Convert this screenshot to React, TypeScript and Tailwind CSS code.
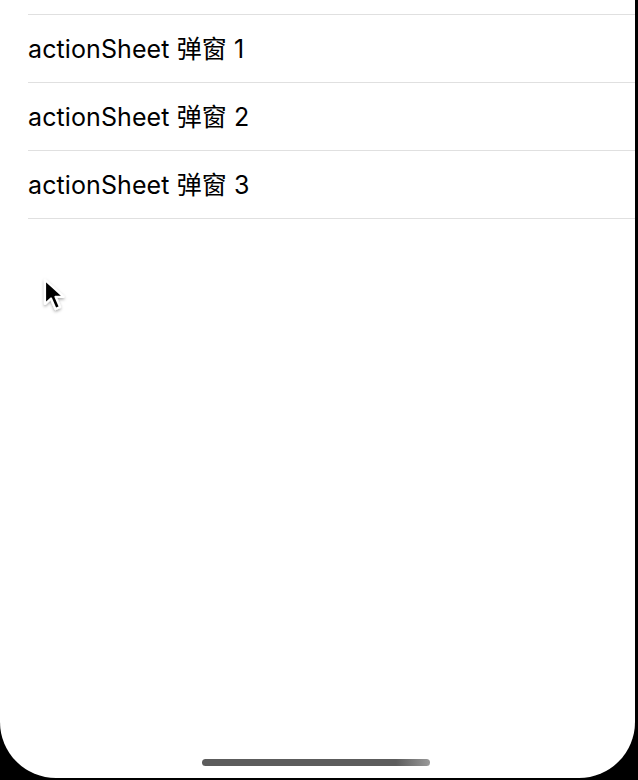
const items = ["actionSheet 弹窗 1", "actionSheet 弹窗 2", "actionSheet 弹窗 3"];

function Cursor() {
  return (
    <svg
      className="absolute left-[41px] top-[276px]"
      width="28"
      height="42"
      viewBox="0 0 28 42"
    >
      <defs>
        <filter id="sh" x="-50%" y="-50%" width="200%" height="200%">
          <feDropShadow dx="0" dy="1.5" stdDeviation="1.5" floodColor="#000" floodOpacity="0.35" />
        </filter>
      </defs>
      <path
        d="M4 4 L4 28 L10 22.5 L14.5 33 L19 31 L14.5 20.8 L22.5 20.8 Z"
        fill="#000"
        stroke="#fff"
        strokeWidth="2.2"
        strokeLinejoin="round"
        filter="url(#sh)"
      />
    </svg>
  );
}

export default function App() {
  return (
    <div className="w-[638px] h-[780px] bg-black overflow-hidden">
      <div className="relative w-[635px] h-[778px] bg-white rounded-b-[56px] overflow-hidden pt-[14px]">
        <ul className="ml-[28px] border-t border-[#e0e0e0]">
          {items.map((t) => (
            <li
              key={t}
              className="h-[68px] flex items-center border-b border-[#e0e0e0] text-[25px] text-black pt-[2px] tracking-[0.1px]"
              style={{ fontFamily: "Inter, 'Noto Sans CJK SC', sans-serif" }}
            >
              {t}
            </li>
          ))}
        </ul>
        <Cursor />
        <div className="absolute left-[202px] top-[759px] w-[228px] h-[7px] rounded-full bg-gradient-to-r from-[#5c5c5c] via-[#5c5c5c] via-85% to-[#9a9a9a]" />
      </div>
    </div>
  );
}
